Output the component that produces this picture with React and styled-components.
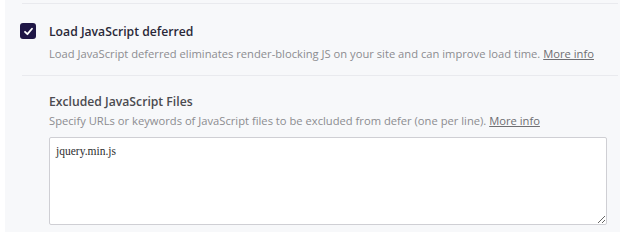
import React from 'react';
import styled, { createGlobalStyle } from 'styled-components';

const GlobalStyle = createGlobalStyle`
  body {
    margin: 0;
    background: #ffffff;
    font-family: "Open Sans", "Liberation Sans", sans-serif;
  }
`;

const Panel = styled.div`
  margin-left: 5px;
  width: 615px;
  height: 232px;
  box-sizing: border-box;
  background: #f7f8fa;
  padding: 3px 2px 0 17px;
`;

const OptionRow = styled.div`
  display: flex;
  gap: 13px;
  border-top: 1px solid #e9eaee;
  border-bottom: 1px solid #e9eaee;
  padding: 19px 0 13px 0;
`;

const Checkbox = styled.span`
  flex: none;
  width: 16px;
  height: 16px;
  margin-left: -2px;
  border-radius: 3px;
  background: #1f1646;
  display: flex;
  align-items: center;
  justify-content: center;
`;

const Body = styled.div`
  display: flex;
  flex-direction: column;
`;

const Title = styled.div`
  font-size: 12.2px;
  font-weight: 600;
  line-height: 18px;
  color: ${p => p.muted ? '#4b4b50' : '#2a2838'};
`;

const Desc = styled.div`
  font-size: 11.2px;
  line-height: 16px;
  color: #8c8c90;
  margin-top: ${p => p.gap || 4}px;
`;

const More = styled.a`
  color: #6e6e72;
  text-decoration: underline;
`;

const SubSection = styled.div`
  padding: 17px 0 0 27px;
  display: flex;
  flex-direction: column;
`;

const Files = styled.textarea`
  margin-top: 8px;
  width: 558px;
  height: 88px;
  box-sizing: border-box;
  border: 1px solid #cfcfd4;
  border-radius: 2px;
  background: #fff;
  padding: 7px 6px;
  font-family: "Liberation Serif", serif;
  font-size: 11.5px;
  font-weight: 400;
  color: #2e2e2e;
  resize: vertical;
  outline: none;
`;

export default function App() {
  return (
    <>
      <GlobalStyle />
      <Panel>
        <OptionRow>
          <Checkbox>
            <svg width="11" height="11" viewBox="0 0 12 12">
              <path d="M2.2 6.3 L4.8 8.9 L9.8 3" fill="none" stroke="#fff" strokeWidth="2" strokeLinecap="round" strokeLinejoin="round" />
            </svg>
          </Checkbox>
          <Body>
            <Title>Load JavaScript deferred</Title>
            <Desc gap={5}>
              Load JavaScript deferred eliminates render-blocking JS on your site and can improve load time. <More>More info</More>
            </Desc>
          </Body>
        </OptionRow>
        <SubSection>
          <Title muted>Excluded JavaScript Files</Title>
          <Desc gap={2}>
            Specify URLs or keywords of JavaScript files to be excluded from defer (one per line). <More>More info</More>
          </Desc>
          <Files defaultValue="jquery.min.js" />
        </SubSection>
      </Panel>
    </>
  );
}
